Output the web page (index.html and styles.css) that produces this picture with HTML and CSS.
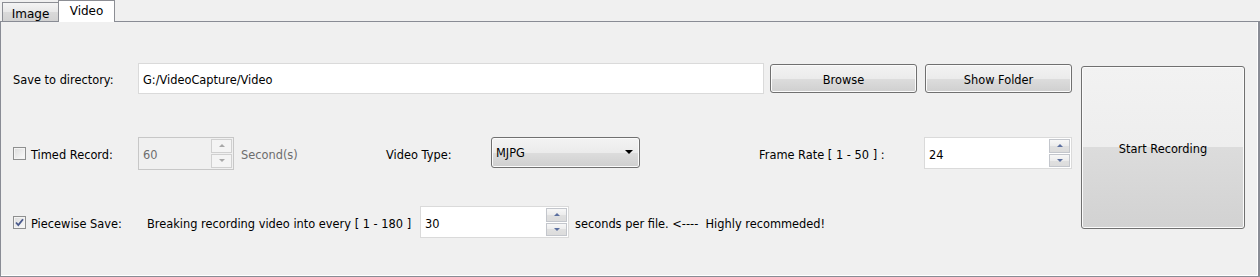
FILE: index.html
```html
<!DOCTYPE html>
<html>
<head>
<meta charset="utf-8">
<link rel="stylesheet" href="styles.css">
</head>
<body>
<div class="tabbar">
  <div class="tab">Image</div>
  <div class="tab active">Video</div>
</div>
<div class="pane">
  <div class="content">
    <div class="left">
      <div class="row row1">
        <div class="label w125">Save to directory:</div>
        <div class="textbox">G:/VideoCapture/Video</div>
        <div class="btn browse">Browse</div>
        <div class="btn showfolder">Show Folder</div>
      </div>
      <div class="row row2">
        <div class="check-label w125">
          <span class="checkbox"></span>
          <span class="txt">Timed Record:</span>
        </div>
        <div class="spin disabled w96">
          <span class="spin-text">60</span>
          <span class="spin-btns">
            <span class="sbtn"><span class="tri up"></span></span>
            <span class="sbtn"><span class="tri down"></span></span>
          </span>
        </div>
        <div class="label gray seconds">Second(s)</div>
        <div class="label w105">Video Type:</div>
        <div class="btn combo">
          <span class="txt">MJPG</span>
          <span class="combo-arrow"></span>
        </div>
        <div class="label framelabel">Frame Rate [ 1 - 50 ] :</div>
        <div class="spin w148">
          <span class="spin-text">24</span>
          <span class="spin-btns">
            <span class="sbtn"><span class="tri up"></span></span>
            <span class="sbtn"><span class="tri down"></span></span>
          </span>
        </div>
      </div>
      <div class="row row3">
        <div class="check-label w134">
          <span class="checkbox checked">
            <svg width="11" height="11" viewBox="0 0 11 11"><path d="M2 5.5 L4.3 8 L9 2.2" fill="none" stroke="#4a5a8c" stroke-width="1.8"/></svg>
          </span>
          <span class="txt">Piecewise Save:</span>
        </div>
        <div class="label w273">Breaking recording video into every [ 1 - 180 ]</div>
        <div class="spin w149">
          <span class="spin-text">30</span>
          <span class="spin-btns">
            <span class="sbtn"><span class="tri up"></span></span>
            <span class="sbtn"><span class="tri down"></span></span>
          </span>
        </div>
        <div class="label after">seconds per file. &lt;----&nbsp;&nbsp;Highly recommeded!</div>
      </div>
    </div>
    <div class="btn start"><span class="txt">Start Recording</span></div>
  </div>
</div>
</body>
</html>
```

FILE: styles.css
```css
html, body {
  margin: 0;
  padding: 0;
}
body {
  width: 1260px;
  height: 277px;
  overflow: hidden;
  background: #f0f0f0;
  font-family: "DejaVu Sans", Tahoma, sans-serif;
  font-size: 11.4px;
  color: #000;
}
.tabbar {
  height: 21px;
  display: flex;
  align-items: flex-end;
  padding-left: 2px;
  position: relative;
  z-index: 2;
}
.tab {
  box-sizing: border-box;
  height: 19px;
  width: 57px;
  border: 1px solid #8c8e94;
  border-bottom: none;
  background: linear-gradient(#f4f4f4, #e8e8e8 50%, #dadada 50%, #d2d2d2);
  display: flex;
  align-items: center;
  justify-content: center;
  padding-top: 3px;
  font-size: 12px;
}
.tab.active {
  height: 22px;
  width: 57px;
  margin-left: -1px;
  margin-bottom: -1px;
  background: #fff;
  padding-top: 0;
  padding-bottom: 2px;
}
.pane {
  box-sizing: border-box;
  height: 256px;
  width: 1260px;
  border: 1px solid #898c95;
  border-right-width: 2px;
  background: #f0f0f0;
  box-shadow: inset -1px -1px 0 #ffffff;
  padding: 41px 0 0 12px;
}
.content {
  display: flex;
  gap: 9px;
}
.left {
  width: 1059px;
  display: flex;
  flex-direction: column;
}
.row {
  display: flex;
  align-items: center;
  height: 32px;
}
.row1 { height: 31px; }
.row2 { margin-top: 43px; }
.row3 { margin-top: 37px; }
.label {
  white-space: nowrap;
  flex: none;
  padding-top: 3px;
}
.txt { padding-top: 3px; }
.gray { color: #6d6d6d; }
.w125 { width: 125px; }
.w105 { width: 105px; }
.w134 { width: 134px; }
.w273 { width: 273px; }
.w96 { width: 96px; }
.w148 { width: 148px; }
.w149 { width: 149px; }
.seconds { width: 145px; margin-left: 7px; }
.framelabel { width: 165px; margin-left: 119px; }
.after { margin-left: 6px; }

.textbox {
  box-sizing: border-box;
  width: 626px;
  height: 31px;
  background: #fff;
  border: 1px solid #dadada;
  display: flex;
  align-items: center;
  padding: 3px 0 0 4px;
}
.btn {
  box-sizing: border-box;
  border: 1px solid #707070;
  border-radius: 3px;
  background: linear-gradient(#f3f3f3, #ebebeb 50%, #dddddd 50%, #cfcfcf);
  box-shadow: inset 0 0 0 1px #fbfbfb;
  display: flex;
  align-items: center;
  justify-content: center;
  flex: none;
  white-space: nowrap;
}
.browse, .showfolder { padding-top: 3px; }
.browse { width: 147px; height: 29px; margin-left: 6px; }
.showfolder { width: 147px; height: 29px; margin-left: 8px; }
.start {
  width: 164px;
  height: 163px;
  margin-top: 3px;
  background: linear-gradient(#f2f2f2, #eeeeee 50%, #dcdcdc 50%, #d2d2d2);
}
.combo {
  width: 149px;
  height: 31px;
  justify-content: space-between;
  padding: 0 6px 1px 4px;
  margin-top: -2px;
}
.combo-arrow {
  width: 0;
  height: 0;
  border-left: 4px solid transparent;
  border-right: 4px solid transparent;
  border-top: 4px solid #000;
  margin-top: 1px;
}
.check-label {
  display: flex;
  align-items: center;
  gap: 5px;
  flex: none;
  white-space: nowrap;
}
.checkbox {
  box-sizing: border-box;
  width: 13px;
  height: 13px;
  border: 1px solid #8e8f8f;
  background: linear-gradient(135deg, #dcdcdc, #fbfbfb);
  box-shadow: inset 0 0 0 1px #f4f4f4;
  display: flex;
  align-items: center;
  justify-content: center;
  flex: none;
  margin-top: 1px;
}
.spin {
  box-sizing: border-box;
  height: 32px;
  background: #fff;
  border: 1px solid #dadada;
  display: flex;
  align-items: stretch;
  padding: 1px;
  flex: none;
}
.spin.disabled {
  height: 33px;
  background: #f0f0f0;
  border-color: #c7c7c7;
  color: #6d6d6d;
}
.spin-text {
  flex: 1;
  display: flex;
  align-items: center;
  padding: 3px 0 0 3px;
}
.spin-btns {
  width: 21px;
  display: flex;
  flex-direction: column;
  gap: 1px;
}
.sbtn {
  box-sizing: border-box;
  flex: 1;
  border: 1px solid #c3c6cc;
  background: linear-gradient(#f7f7f7, #ececec 50%, #e0e0e0 50%, #dcdcdc);
  display: flex;
  align-items: center;
  justify-content: center;
}
.disabled .sbtn {
  border-color: #d0d0d0;
  background: #f4f4f4;
}
.tri {
  width: 0;
  height: 0;
  border-left: 3px solid transparent;
  border-right: 3px solid transparent;
}
.tri.up { border-bottom: 3px solid #5b6f9f; }
.tri.down { border-top: 3px solid #5b6f9f; }
.disabled .tri.up { border-bottom-color: #a8a8a8; }
.disabled .tri.down { border-top-color: #a8a8a8; }
```
